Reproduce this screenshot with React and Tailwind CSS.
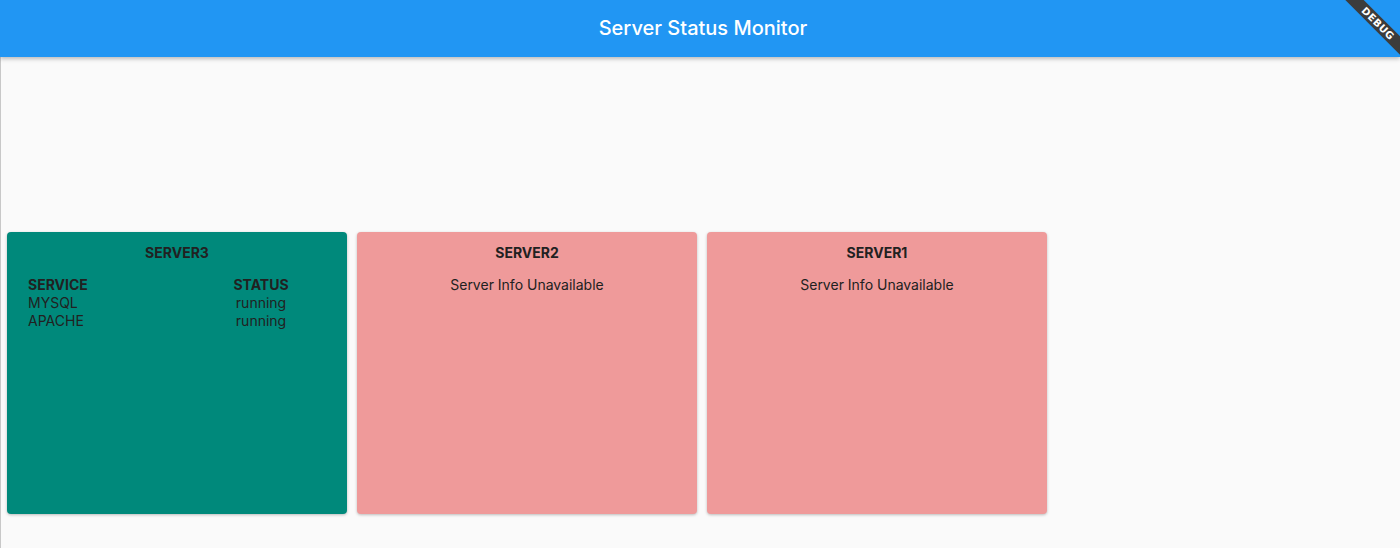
import React from "react";

const servers = [
  {
    name: "SERVER3",
    up: true,
    services: [
      { service: "MYSQL", status: "running" },
      { service: "APACHE", status: "running" },
    ],
  },
  { name: "SERVER2", up: false },
  { name: "SERVER1", up: false },
];

function ServerCard({ server }) {
  return (
    <div
      className={`w-[340px] h-[282px] rounded-[4px] shadow-[0_1px_3px_rgba(0,0,0,0.25)] pt-[12px] text-[#212121] ${
        server.up ? "bg-[#00897b]" : "bg-[#ef9a9a]"
      }`}
    >
      <div className="text-center text-[14px] leading-[18px] font-bold">{server.name}</div>
      {server.up ? (
        <div className="mt-[14px] pl-[21px] text-[14px] leading-[18px]">
          <div className="grid grid-cols-[155px_156px] font-bold">
            <div>SERVICE</div>
            <div className="text-center">STATUS</div>
          </div>
          {server.services.map((s) => (
            <div key={s.service} className="grid grid-cols-[155px_156px]">
              <div>{s.service}</div>
              <div className="text-center">{s.status}</div>
            </div>
          ))}
        </div>
      ) : (
        <div className="mt-[14px] text-center text-[14px] leading-[18px]">Server Info Unavailable</div>
      )}
    </div>
  );
}

export default function App() {
  return (
    <div className="relative w-[1400px] h-[548px] overflow-hidden bg-[#fafafa] font-['Inter',sans-serif]">
      {/* App bar */}
      <div className="relative z-10 h-[57px] bg-[#2196f3] flex items-center justify-center shadow-[0_2px_4px_rgba(0,0,0,0.25)]">
        <span className="text-white text-[20px] font-medium pb-[2px] pl-[6px]">Server Status Monitor</span>
      </div>

      {/* Body */}
      <div className="h-[491px] border-l border-[#c8c8c8] pt-[175px] pl-[6px] flex gap-[10px] items-start">
        {servers.map((s) => (
          <ServerCard key={s.name} server={s} />
        ))}
      </div>

      {/* Debug banner */}
      <div className="absolute top-0 right-0 w-[60px] h-[60px] overflow-hidden z-20">
        <div className="absolute left-[-12px] top-[17px] w-[100px] h-[13px] rotate-45 bg-[#3c3c3c] flex items-center justify-center">
          <span className="text-white text-[10px] font-bold leading-none tracking-[0.5px] font-['DejaVu_Sans',sans-serif]">
            DEBUG
          </span>
        </div>
      </div>
    </div>
  );
}
